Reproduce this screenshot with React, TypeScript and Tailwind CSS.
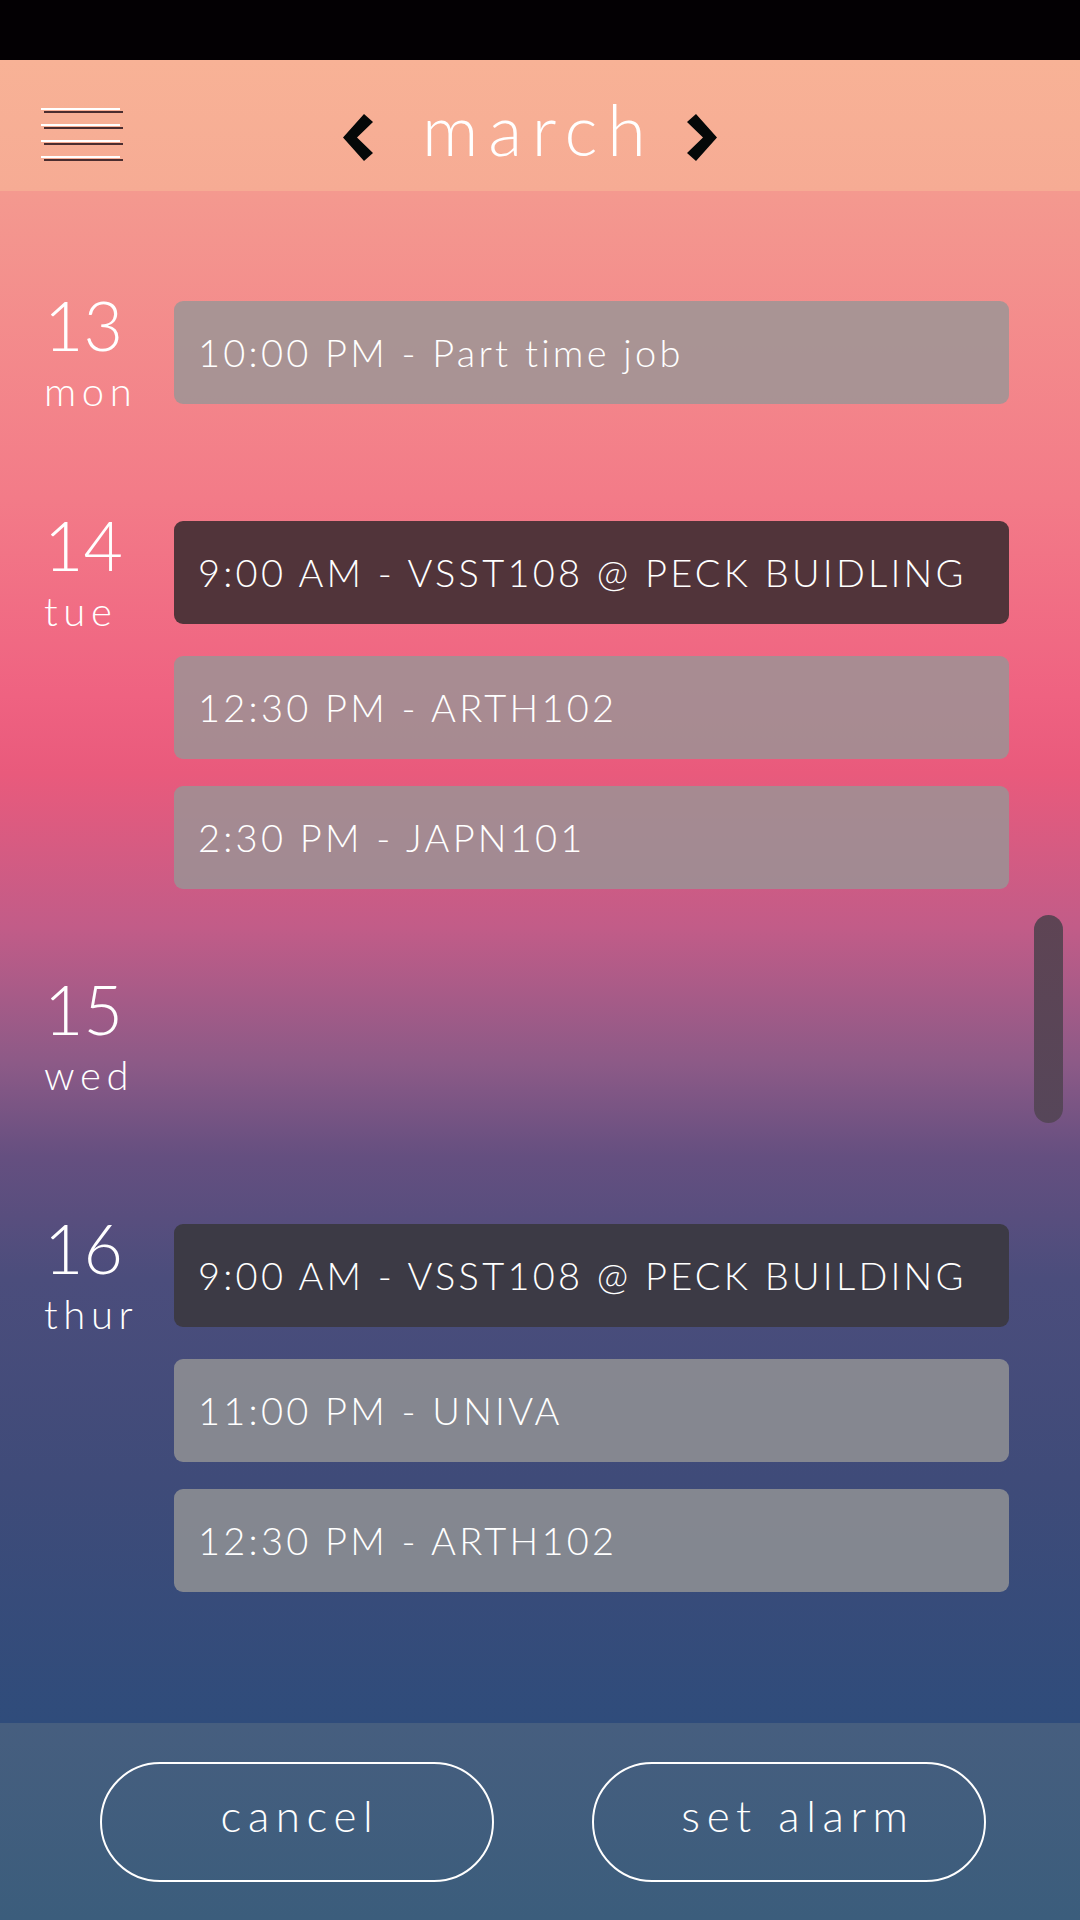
import React from 'react';

type TEvent = {
  label: string;
  tone: 'light' | 'rose' | 'slate';
};

type TDay = {
  num: string;
  name: string;
  rowClass: string;
  events: TEvent[];
};

const days: TDay[] = [
  {
    num: '13',
    name: 'mon',
    rowClass: 'mt-[110px]',
    events: [{ label: '10:00 PM - Part time job', tone: 'light' }]
  },
  {
    num: '14',
    name: 'tue',
    rowClass: 'mt-[110px]',
    events: [
      { label: '9:00 AM - VSST108 @ PECK BUIDLING', tone: 'rose' },
      { label: '12:30 PM - ARTH102', tone: 'light' },
      { label: '2:30 PM - JAPN101', tone: 'light' }
    ]
  },
  {
    num: '15',
    name: 'wed',
    rowClass: 'mt-[96px]',
    events: []
  },
  {
    num: '16',
    name: 'thur',
    rowClass: 'mt-[129px]',
    events: [
      { label: '9:00 AM - VSST108 @ PECK BUILDING', tone: 'slate' },
      { label: '11:00 PM - UNIVA', tone: 'light' },
      { label: '12:30 PM - ARTH102', tone: 'light' }
    ]
  }
];

const toneClass = {
  light: 'bg-[#969696]/80',
  rose: 'bg-[#51343a]',
  slate: 'bg-[#3c3a45]'
};

const gapClass = ['', 'mt-[32px]', 'mt-[27px]'];

const buttons = [
  { label: 'cancel', padClass: 'pl-[6px]' },
  { label: 'set alarm', padClass: 'pl-[18px]' }
];

const Chevron = ({ flip = false }: { flip?: boolean }) => (
  <svg width="31" height="47" viewBox="0 0 31 47" className="mt-[54px] shrink-0">
    <polygon
      points={
        flip
          ? '10,0 1,8 17,23.5 1,39 10,47 31,23.5'
          : '21,0 30,8 14,23.5 30,39 21,47 0,23.5'
      }
      fill="#050808"
    />
  </svg>
);

const Hamburger = () => (
  <div className="mt-[48px] flex w-[82px] flex-col gap-[14px]">
    {[0, 1, 2, 3].map((i) => (
      <div
        key={i}
        className="h-[2px] w-[79px] bg-white shadow-[3px_3px_0_0_#4b2d2f]"
      />
    ))}
  </div>
);

const DayRow = ({ day }: { day: TDay }) => (
  <div className={`flex items-start ${day.rowClass}`}>
    <div className="flex w-[174px] shrink-0 flex-col pl-[44px] text-white">
      <div className="text-[68px] leading-[48px] font-light">{day.num}</div>
      <div className="mt-[22px] text-[40px] leading-[40px] font-light tracking-[0.14em]">
        {day.name}
      </div>
    </div>
    {day.events.length > 0 && (
      <div className="flex w-[835px] flex-col">
        {day.events.map((ev, i) => (
          <div
            key={ev.label}
            className={`flex h-[103px] items-center rounded-[9px] pl-[24px] ${toneClass[ev.tone]} ${gapClass[i]}`}
          >
            <span className="text-[38px] font-light tracking-[0.085em] whitespace-nowrap text-white">
              {ev.label}
            </span>
          </div>
        ))}
      </div>
    )}
  </div>
);

export default function App() {
  return (
    <div className="flex h-[1920px] w-[1080px] flex-col overflow-hidden font-[family-name:Lato,sans-serif]">
      <div className="h-[60px] shrink-0 bg-[#030003]" />

      <header className="flex h-[131px] shrink-0 items-start bg-gradient-to-b from-[#f8b296] to-[#f6ab94] pl-[41px]">
        <Hamburger />
        <div className="ml-[220px] flex items-start">
          <Chevron />
          <span className="mt-[34px] ml-[48px] text-[70px] leading-[70px] font-light tracking-[0.14em] text-white">
            march
          </span>
          <div className="ml-[30px]">
            <Chevron flip />
          </div>
        </div>
      </header>

      <main className="relative flex h-[1532px] shrink-0 flex-col bg-[linear-gradient(180deg,#f4998f_0%,#f37b88_20%,#ef6281_33%,#e95a7c_38%,#c25c88_48%,#8c5a87_57%,#654f80_63%,#4b4d7c_71%,#3f4b79_84%,#2f4c7b_100%)]">
        {days.map((day) => (
          <DayRow key={day.num} day={day} />
        ))}
        <div className="absolute top-[724px] right-[17px] h-[208px] w-[29px] rounded-full bg-gradient-to-b from-[#5e4454] to-[#564659]" />
      </main>

      <footer className="flex h-[197px] shrink-0 items-center gap-[98px] bg-gradient-to-b from-[#465e7f] to-[#3b5d7c] pl-[100px]">
        {buttons.map((b) => (
          <button
            key={b.label}
            className={`flex h-[120px] w-[394px] items-center justify-center rounded-full border-2 border-white pb-[14px] text-[44px] font-light tracking-[0.15em] [word-spacing:2px] text-white ${b.padClass}`}
          >
            {b.label}
          </button>
        ))}
      </footer>
    </div>
  );
}
